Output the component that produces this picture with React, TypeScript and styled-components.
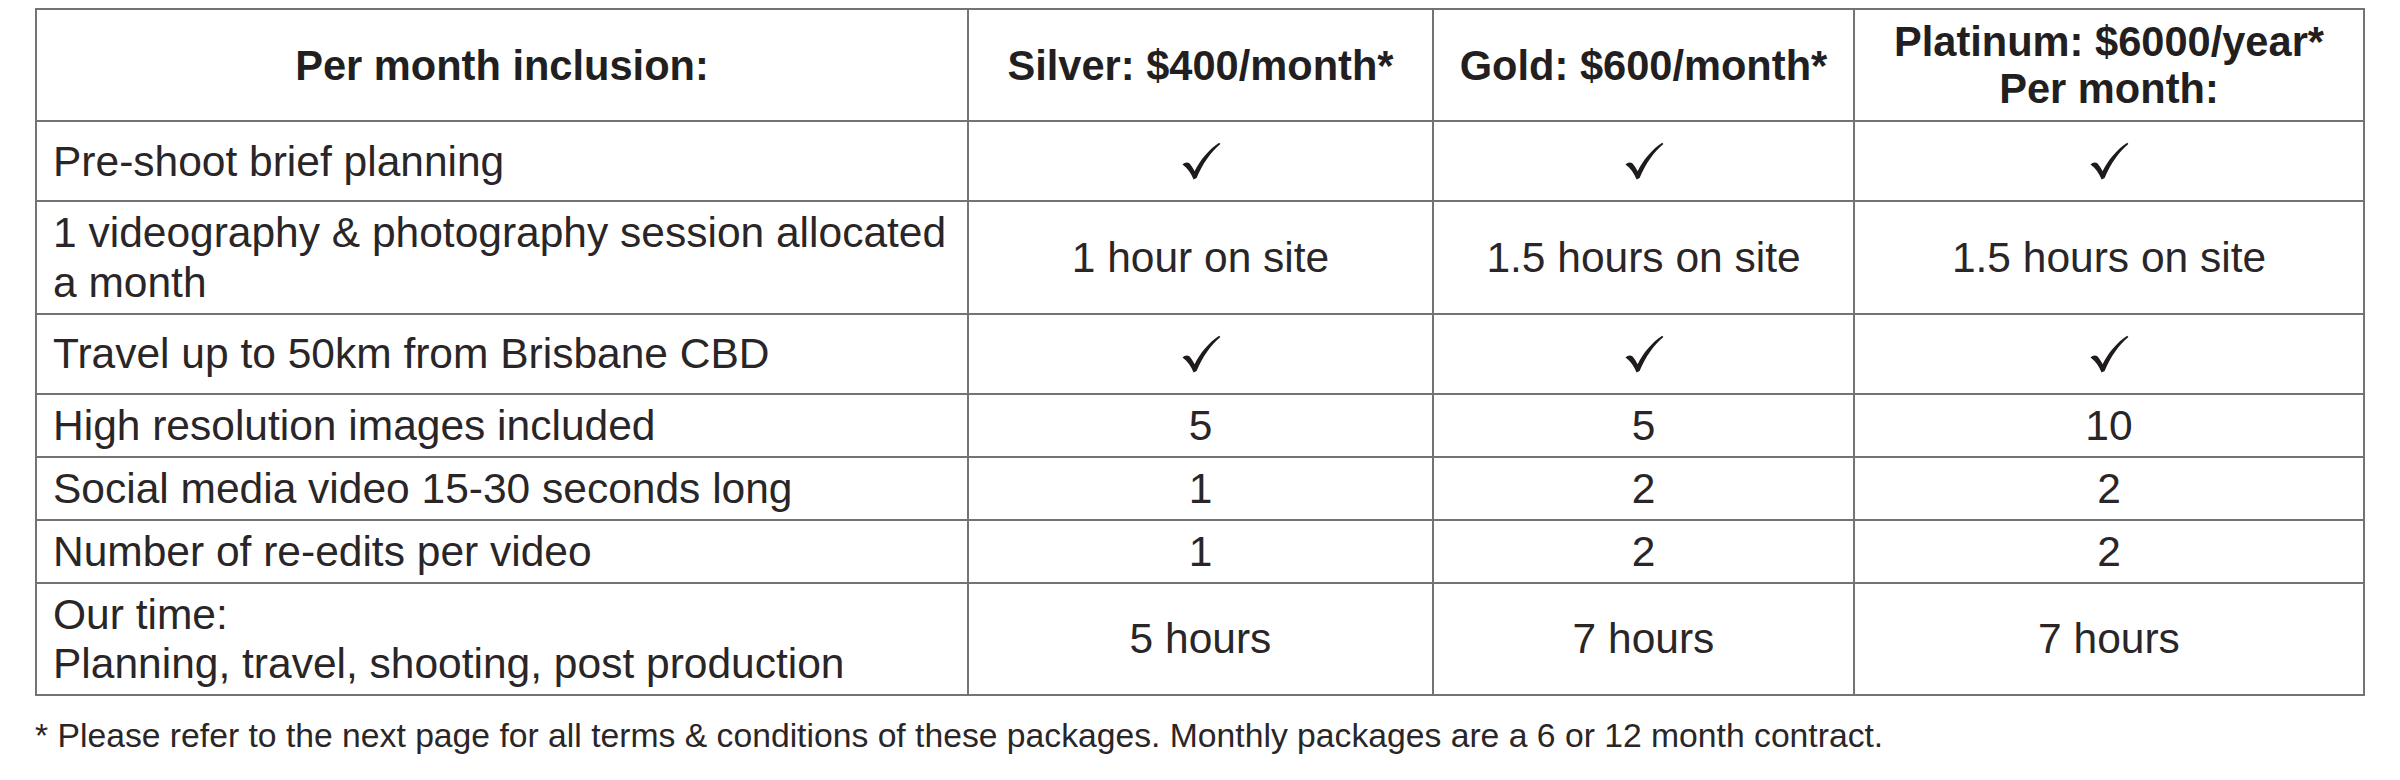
import React from "react";
import styled, { createGlobalStyle } from "styled-components";

const GlobalStyle = createGlobalStyle`
  html, body {
    margin: 0;
    padding: 0;
    background: #ffffff;
  }
  body {
    font-family: "Liberation Sans", Arial, Helvetica, sans-serif;
    color: #231f20;
  }
`;

type Value = string | "check";

interface Inclusion {
  label: string[];
  values: Value[];
  tall?: boolean;
}

const plans: string[][] = [
  ["Silver: $400/month*"],
  ["Gold: $600/month*"],
  ["Platinum: $6000/year*", "Per month:"],
];

const inclusions: Inclusion[] = [
  { label: ["Pre-shoot brief planning"], values: ["check", "check", "check"], tall: true },
  {
    label: ["1 videography & photography session allocated", "a month"],
    values: ["1 hour on site", "1.5 hours on site", "1.5 hours on site"],
  },
  { label: ["Travel up to 50km from Brisbane CBD"], values: ["check", "check", "check"], tall: true },
  { label: ["High resolution images included"], values: ["5", "5", "10"] },
  { label: ["Social media video 15-30 seconds long"], values: ["1", "2", "2"] },
  { label: ["Number of re-edits per video"], values: ["1", "2", "2"] },
  {
    label: ["Our time:", "Planning, travel, shooting, post production"],
    values: ["5 hours", "7 hours", "7 hours"],
  },
];

const Page = styled.div`
  padding: 8px 0 0 35px;
  width: 2328px;
`;

const Table = styled.table`
  width: 2328px;
  table-layout: fixed;
  border-collapse: collapse;
  border: 2px solid #666666;
`;

const Row = styled.tr<{ $tall?: boolean }>`
  height: ${(p) => (p.$tall ? "80px" : "auto")};
`;

const HeadCell = styled.th`
  border: 2px solid #737373;
  padding: 8px 10px;
  font-size: 41.6px;
  line-height: 47px;
  font-weight: 700;
  text-align: center;
  vertical-align: middle;
  color: #231f20;
`;

const LabelCell = styled.td`
  border: 2px solid #737373;
  padding: 6px 16px 5.5px;
  font-size: 42.5px;
  line-height: 49.5px;
  text-align: left;
  vertical-align: middle;
  color: #2a2627;
`;

const ValueCell = styled(LabelCell)`
  text-align: center;
  padding: 6px 10px 5.5px;
`;

const CheckMark = styled.svg`
  display: block;
  margin: 0 auto;
  width: 40px;
  height: 38px;
`;

const Note = styled.p`
  margin: 20px 0 0;
  font-size: 33.7px;
  line-height: 38px;
  color: #2a2627;
  white-space: nowrap;
`;

const Check = () => (
  <CheckMark viewBox="0 0 40 38">
    <path
      d="M1.5 22.5 C3.5 20.2 6.6 19.6 8.6 21.6 C10.4 23.6 12 26.4 13.6 29.2 C19.4 17.8 27.4 8 38.2 0.8 L39.4 2 C29.6 10.4 21.8 21.4 15.6 36 L12.6 37.4 C10 31 6.6 26.2 1.5 22.5 Z"
      fill="#1f1b1c"
    />
  </CheckMark>
);

const Lines = ({ lines }: { lines: string[] }) => (
  <>
    {lines.map((line, i) => (
      <React.Fragment key={i}>
        {i > 0 && <br />}
        {line}
      </React.Fragment>
    ))}
  </>
);

export default function App() {
  return (
    <>
      <GlobalStyle />
      <Page>
        <Table>
          <colgroup>
            <col style={{ width: 932 }} />
            <col style={{ width: 465 }} />
            <col style={{ width: 421 }} />
            <col style={{ width: 510 }} />
          </colgroup>
          <thead>
            <tr>
              <HeadCell>Per month inclusion:</HeadCell>
              {plans.map((plan, i) => (
                <HeadCell key={i}>
                  <Lines lines={plan} />
                </HeadCell>
              ))}
            </tr>
          </thead>
          <tbody>
            {inclusions.map((row, i) => (
              <Row key={i} $tall={row.tall}>
                <LabelCell>
                  <Lines lines={row.label} />
                </LabelCell>
                {row.values.map((v, j) => (
                  <ValueCell key={j}>{v === "check" ? <Check /> : v}</ValueCell>
                ))}
              </Row>
            ))}
          </tbody>
        </Table>
        <Note>
          * Please refer to the next page for all terms &amp; conditions of these packages. Monthly
          packages are a 6 or 12 month contract.
        </Note>
      </Page>
    </>
  );
}
